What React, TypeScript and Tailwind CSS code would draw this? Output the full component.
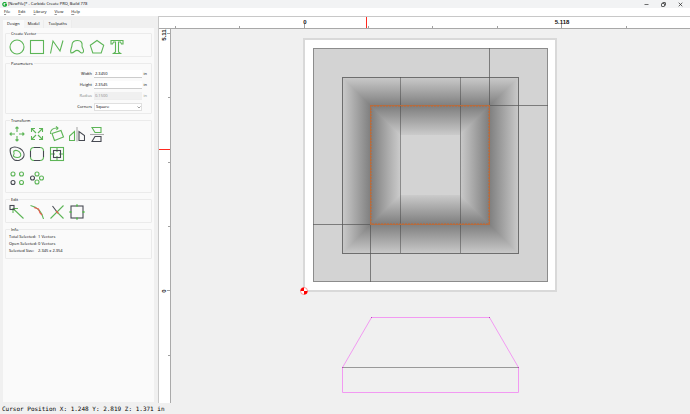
import type { ReactNode } from "react"

const GREEN = "#5db557"
const DARK = "#474a52"

const menus = ["File", "Edit", "Library", "View", "Help"]

const tabs = [
  { name: "Design", active: true },
  { name: "Model", active: false },
  { name: "Toolpaths", active: false }
]

const fields = [
  { id: "width", label: "Width", value: "2.3450", disabled: false },
  { id: "height", label: "Height", value: "2.3545", disabled: false },
  { id: "radius", label: "Radius", value: "0.1500", disabled: true }
]

const info = [
  { label: "Total Selected:", value: "1 Vectors" },
  { label: "Open Selected:", value: "0 Vectors" },
  { label: "Selected Size:", value: "2.345 x 2.354" }
]

function Tool({ label, children }: { label: string; children: ReactNode }) {
  return (
    <button aria-label={label} className="h-4 w-4">
      <svg viewBox="0 0 16 16" className="h-4 w-4" fill="none" stroke={GREEN} strokeWidth="1.1">
        {children}
      </svg>
    </button>
  )
}

function Group({ title, className, children }: { title: string; className: string; children: ReactNode }) {
  return (
    <fieldset className={`min-w-0 rounded-[1px] border border-[#ebebeb] ${className}`}>
      <legend className="ml-1 h-[5px] px-px leading-[5px]">{title}</legend>
      {children}
    </fieldset>
  )
}

function TopRuler() {
  return (
    <svg className="h-[11px] w-full" stroke="#a0a0a0" shapeRendering="crispEdges">
      {[16, 80, 145, 209, 273, 338, 402, 467].map((x) => (
        <path key={x} d={`M${x}.5 ${x === 145 || x === 402 ? 7 : 9}V11`} />
      ))}
      <rect x="207" y="0" width="1" height="11" fill="#ff2a20" stroke="none" />
      <g stroke="none" fill="#111" fontSize="6" fontWeight="bold" textAnchor="middle">
        <text x="146" y="7">0</text>
        <text x="403" y="7">5.118</text>
      </g>
    </svg>
  )
}

function SideRuler() {
  return (
    <svg className="w-3 shrink-0 self-stretch border-r border-[#aaa] bg-white font-['Liberation_Sans',sans-serif]" stroke="#a0a0a0" shapeRendering="crispEdges">
      {[4, 68, 133, 197, 261, 326].map((y) => (
        <path key={y} d={`M${y === 4 || y === 261 ? 8 : 9} ${y}.5H12`} />
      ))}
      <rect x="0" y="120" width="12" height="1" fill="#ff2a20" stroke="none" />
      <g stroke="none" fill="#111" fontSize="6" fontWeight="bold" textAnchor="middle">
        <text transform="translate(7 6) rotate(-90)">5.11</text>
        <text transform="translate(7 262) rotate(-90)">0</text>
      </g>
    </svg>
  )
}

function Drawing() {
  return (
    <svg className="min-h-[374px] min-w-0 flex-1 bg-[#f0f0f0]" fill="none">
      <defs>
        <linearGradient id="up" x1="0" y1="1" x2="0" y2="0">
          <stop stopColor="#7e7e7e" />
          <stop offset="1" stopColor="#cbcbcb" />
        </linearGradient>
        <linearGradient id="down" x1="0" y1="0" x2="0" y2="1">
          <stop stopColor="#7e7e7e" />
          <stop offset="1" stopColor="#cbcbcb" />
        </linearGradient>
        <linearGradient id="left" x1="1" y1="0" x2="0" y2="0">
          <stop stopColor="#7e7e7e" />
          <stop offset="1" stopColor="#cbcbcb" />
        </linearGradient>
        <linearGradient id="right" x1="0" y1="0" x2="1" y2="0">
          <stop stopColor="#7e7e7e" />
          <stop offset="1" stopColor="#cbcbcb" />
        </linearGradient>
      </defs>

      <rect x="133" y="10" width="252" height="252" fill="#fff" stroke="#d9d9d9" strokeWidth="2" />
      <rect x="142.5" y="19.5" width="234" height="233" fill="#d3d3d3" stroke="#8c8c8c" />

      <g shapeRendering="crispEdges">
        {/* slopes outside the selected square */}
        <path d="M171 48H348L318 77H200Z" fill="url(#up)" />
        <path d="M171 225H348L318 195H200Z" fill="url(#down)" />
        <path d="M171 48V225L200 195V77Z" fill="url(#left)" />
        <path d="M348 48V225L318 195V77Z" fill="url(#right)" />
        {/* slopes inside it */}
        <rect x="200" y="77" width="118" height="118" fill="#d3d3d3" />
        <path d="M200 77H318L289 106H229Z" fill="url(#down)" />
        <path d="M200 195H318L289 166H229Z" fill="url(#up)" />
        <path d="M200 77V195L229 166V106Z" fill="url(#right)" />
        <path d="M318 77V195L289 166V106Z" fill="url(#left)" />
      </g>

      <rect x="171.5" y="48.5" width="176" height="176" stroke="#6e6e6e" />
      <path d="M229.5 48V224M289.5 48V224" stroke="#444" strokeOpacity=".5" />
      <path d="M318.5 19V77M318 76.5H377M142 195.5H200M199.5 195V253" stroke="#555" strokeOpacity=".7" />
      <rect x="199.5" y="76.5" width="119" height="119" stroke="#aa7048" />
      <rect x="200" y="77" width="118" height="118" stroke="#c8662e" strokeWidth="2" strokeOpacity=".5" strokeDasharray="2 1" />

      <g transform="translate(133 262)">
        <circle r="3.5" fill="#fff" stroke="#ff3030" strokeWidth=".5" />
        <path d="M0 0V-3.5A3.5 3.5 0 0 0 -3.5 0ZM0 0V3.5A3.5 3.5 0 0 0 3.5 0Z" fill="#f00" />
      </g>

      {/* side profile */}
      <path d="M171.5 338.5L200.5 288.5H318.5L347.5 338.5V363.5H171.5Z" stroke="#f29af2" />
      <path d="M172 338.5H347" stroke="#999" />
      <path d="M200 288.5h1M318 288.5h1M171 338.5h1M347 338.5h1" stroke="#c040c0" />
    </svg>
  )
}

export default function App() {
  return (
    <div className="flex min-h-screen flex-col bg-[#f0f0f0] font-['Open_Sans',sans-serif] text-[4px] leading-[6px] text-black">
      <header className="flex h-2 items-center bg-[#f2f3f4] pl-[2px] pr-[7px]">
        <svg viewBox="0 0 8 8" className="mr-px h-[5px] w-[5px]" fill="none" stroke="#18a934" strokeWidth="2">
          <path d="M7 2.5A3 3 0 1 0 7 5V4H4.500" />
        </svg>
        <h1 className="flex-1">[NewFile]* - Carbide Create PRO, Build 778</h1>
        <div className="flex gap-3">
          <button aria-label="Minimize" className="h-[5px] w-[5px]">
            <svg viewBox="0 0 5 5" stroke="#333" strokeWidth=".7"><path d="M.5 2.500H4.500" /></svg>
          </button>
          <button aria-label="Restore" className="h-[5px] w-[5px]">
            <svg viewBox="0 0 5 5" fill="none" stroke="#222" strokeWidth=".7">
              <rect x=".5" y="1.500" width="3" height="3" rx=".5" />
              <path d="M1.500 .5H4A.5 .5 0 0 1 4.500 1V3.500" />
            </svg>
          </button>
          <button aria-label="Close" className="h-[5px] w-[5px]">
            <svg viewBox="0 0 5 5" stroke="#222" strokeWidth=".7"><path d="M.7 .7L4.300 4.300M4.300 .7L.7 4.300" /></svg>
          </button>
        </div>
      </header>

      <nav className="flex h-2 items-center gap-2 bg-white pl-1">
        {menus.map((m) => (
          <button key={m}>
            <span className="underline decoration-[#999] decoration-1">{m[0]}</span>
            {m.slice(1)}
          </button>
        ))}
      </nav>

      <div className="flex flex-1">
        <aside className="flex w-[158px] shrink-0 flex-col pb-px pl-[3px] pr-1 pt-1">
          <div role="tablist" className="flex h-2">
            {tabs.map((t) => (
              <button
                key={t.name}
                role="tab"
                aria-selected={t.active}
                className={`px-1 ${t.active ? "bg-[#fafafa]" : "border-r border-[#ececec] bg-[#f4f4f4]"}`}
              >
                {t.name}
              </button>
            ))}
          </div>

          <div className="flex flex-1 flex-col gap-1 bg-[#fafafa] px-[2px] pt-[3px]">
            <Group title="Create Vector" className="h-[26px]">
              <div className="flex gap-1 px-[3px] pt-[3px]">
                <Tool label="Circle"><circle cx="8" cy="8" r="7" /></Tool>
                <Tool label="Rectangle"><rect x="1.500" y="1.500" width="13" height="13" /></Tool>
                <Tool label="Polyline"><path d="M1.500 14.500L4 2L11 12L14 1.500" /></Tool>
                <Tool label="Curve">
                  <path d="M2 14C.5 11 3 9 3 6C3 2.500 5.500 1.500 8.500 1.500C12.500 1.500 13.500 4 13 7C13 9.500 15 10 14.500 12.500C14 15 11.500 14 10.500 12.500C9 11 7 11 5.500 12.500C4.500 13.500 3 14 2 14Z" />
                </Tool>
                <Tool label="Polygon"><path d="M8 1.500L14.700 6.300L12.200 14H3.800L1.300 6.300Z" /></Tool>
                <Tool label="Text">
                  <path d="M2 1.500H14V5H12.500L11.500 3H9.500V13L11.500 14.500H4.500L6.500 13V3H4.500L3.500 5H2Z" />
                </Tool>
              </div>
            </Group>

            <Group title="Parameters" className="h-[53px]">
              <div className="flex flex-col gap-[3px] pl-2 pr-1 pt-[4px]">
                {fields.map((f) => (
                  <div key={f.id} className={`flex h-2 items-center ${f.disabled ? "text-[#888]" : ""}`}>
                    <label htmlFor={f.id} className="flex-1 text-right">{f.label}</label>
                    <input
                      id={f.id}
                      defaultValue={f.value}
                      disabled={f.disabled}
                      className="ml-[2px] h-2 w-12 border-b border-[#ccc] bg-white px-px disabled:border-[#eee] disabled:bg-[#f0f0f0]"
                    />
                    <span className="w-[5px] text-right">in</span>
                  </div>
                ))}
                <div className="flex h-2 items-center pr-[5px]">
                  <label htmlFor="corners" className="flex-1 text-right">Corners</label>
                  <div className="relative ml-[2px] h-2 w-12">
                    <select id="corners" className="block h-2 w-full appearance-none border border-[#e0e0e0] bg-white px-px">
                      <option>Square</option>
                    </select>
                    <svg viewBox="0 0 4 4" className="pointer-events-none absolute right-px top-[2px] h-1 w-1" fill="none" stroke="#777" strokeWidth=".7">
                      <path d="M.5 1.500L2 3L3.500 1.500" />
                    </svg>
                  </div>
                </div>
              </div>
            </Group>

            <Group title="Transform" className="h-[75px]">
              <div className="flex gap-1 px-[3px] pt-[3px]">
                <Tool label="Move">
                  <path d="M8 6V1M6.500 2.500L8 1L9.500 2.500M8 10V15M6.500 13.500L8 15L9.500 13.500M6 8H1M2.500 6.500L1 8L2.500 9.500M10 8H15M13.500 6.500L15 8L13.500 9.500" />
                </Tool>
                <Tool label="Scale">
                  <path d="M7 7L2.500 2.500M2.500 6V2.500H6M9 7L13.500 2.500M10 2.500H13.500V6M7 9L2.500 13.500M2.500 10V13.500H6M9 9L13.500 13.500M10 13.500H13.500V10" />
                </Tool>
                <Tool label="Rotate">
                  <path d="M3 7.500L12 4.500L14.500 11L5.500 14.500ZM1.500 8C1 4 4 1.500 9 2M7 .5L9 2L7.500 4" />
                </Tool>
                <Tool label="Mirror horizontally">
                  <path d="M5.500 5.500V14.500H.500V10Z" />
                  <path d="M8 1V15.500" stroke="#aaa" />
                  <path d="M10 5.500V14.500H15.500V9.500Z" stroke={DARK} />
                </Tool>
                <Tool label="Mirror vertically">
                  <path d="M3 1.500H12V6.500H6Z" />
                  <path d="M1 8.500H15" stroke="#aaa" />
                  <path d="M6 10.500H12V15.500H3Z" stroke={DARK} />
                </Tool>
              </div>
              <div className="flex gap-1 px-[3px] pt-1">
                <Tool label="Offset">
                  <path d="M1.500 2.500C4 .5 8 1 11 2.500C14 4.500 16 8 14.500 11C13 14.500 8.500 15 5.500 14C2 12 .5 5 1.500 2.500Z" stroke={DARK} />
                  <path d="M5 5C7 3.500 10.500 5 11.500 7.500C12.500 10 11 11.500 8.500 11.500C5 11.500 3.500 10 5 8C5.500 7 4 6 5 5Z" />
                </Tool>
                <Tool label="Fillet corners">
                  <path d="M1.500 4.500V11.500M14.500 4.500V11.500M4.500 1.500H11.500M4.500 14.500H11.500" stroke={DARK} />
                  <path d="M1.500 5Q1.500 1.500 5 1.500M11 1.500Q14.500 1.500 14.500 5M14.500 11Q14.500 14.500 11 14.500M5 14.500Q1.500 14.500 1.500 11" />
                </Tool>
                <Tool label="Align">
                  <rect x="1.500" y="1.500" width="13" height="13" />
                  <path d="M8 1.500V6M8 10V14.500M1.500 8H6M10 8H14.500" />
                  <rect x="4.500" y="4.500" width="7" height="7" stroke={DARK} />
                </Tool>
              </div>
              <div className="flex gap-1 px-[3px] pt-2">
                <Tool label="Linear array">
                  <circle cx="4" cy="4" r="2" />
                  <circle cx="12.500" cy="4" r="2" />
                  <circle cx="4" cy="12.500" r="2" stroke={DARK} />
                  <circle cx="12.500" cy="12.500" r="2" />
                </Tool>
                <Tool label="Circular array">
                  <circle cx="8" cy="4" r="2" />
                  <circle cx="3.500" cy="8" r="2" stroke={DARK} />
                  <circle cx="12.500" cy="8" r="2" />
                  <circle cx="8" cy="12" r="2" />
                </Tool>
              </div>
            </Group>

            <Group title="Edit" className="h-[26px]">
              <div className="flex gap-1 px-[3px] pt-[2px]">
                <Tool label="Edit nodes">
                  <path d="M14.500 14.500L4 4.500M4 9V4.500H9" />
                  <rect x="1" y="1.500" width="4" height="4" stroke={DARK} />
                </Tool>
                <Tool label="Simplify curve">
                  <path d="M1.500 1.500C8 3 13 8 14.500 15" />
                  <path d="M5 3.500L9.500 5L11 9L13 11" stroke="#ec5b50" />
                </Tool>
                <Tool label="Trim">
                  <path d="M14.500 1.500L1.500 14.500M8 8L14.500 14.500" />
                  <path d="M3.500 2L8 8" stroke={DARK} />
                  <path d="M7 7L9.500 9.500" stroke="#ec5b50" />
                </Tool>
                <Tool label="Resize">
                  <rect x="2" y="2" width="12" height="12" stroke={DARK} />
                  <path d="M7 1.500H9M7 14.500H9M1.500 7V9M14.500 7V9" strokeWidth="2" />
                </Tool>
              </div>
            </Group>

            <Group title="Info" className="h-[32px]">
              <table className="ml-[3px] mt-px leading-[7px]">
                <tbody>
                  {info.map((row) => (
                    <tr key={row.label}>
                      <th scope="row" className="pr-px text-left font-normal">{row.label}</th>
                      <td>{row.value}</td>
                    </tr>
                  ))}
                </tbody>
              </table>
            </Group>
          </div>
        </aside>

        <main className="flex min-w-0 flex-1 flex-col border-l border-t border-[#c8c8c8]">
          <div className="flex border-b border-[#a8a8a8] bg-white font-['Liberation_Sans',sans-serif]">
            <TopRuler />
          </div>
          <div className="flex flex-1">
            <SideRuler />
            <Drawing />
          </div>
        </main>
      </div>

      <footer className="h-[11px] pl-[2px] font-['DejaVu_Sans_Mono',monospace] text-[6px] leading-[11px]">
        Cursor Position X: 1.248 Y: 2.819 Z: 1.371 in
      </footer>
    </div>
  )
}
